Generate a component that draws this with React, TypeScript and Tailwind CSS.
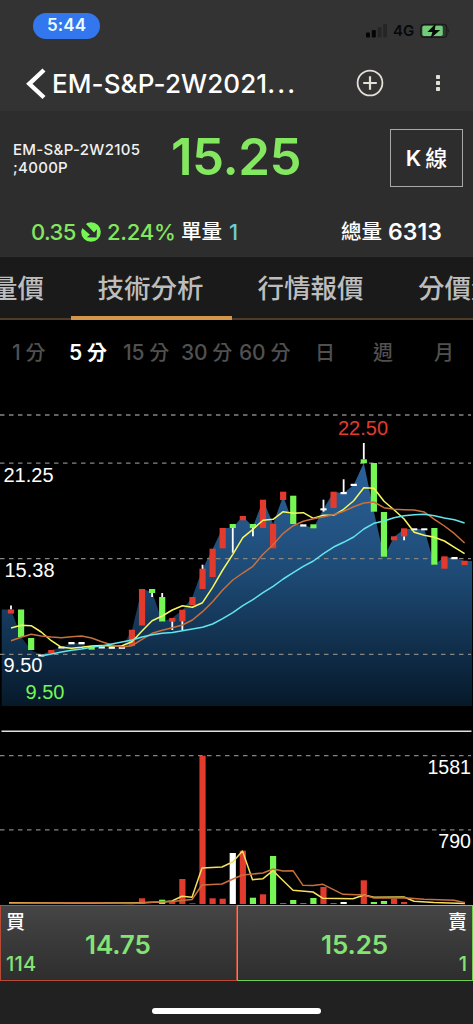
import React from "react";

type Tone = "r" | "g" | "w";
// [body top, body bottom, tone, wick top, wick bottom, close y]
type Candle = [number, number, Tone, number, number, number];

const FILL: Record<Tone, string> = { r: "#e23b2e", g: "#76f654", w: "#ffffff" };
const x = (i: number) => 11 + i * 10.08;

const candles: Candle[] = [
  [609.5, 613.5, "r", 605.5, 609.5, 609.5],
  [609.5, 637, "g", 0, 0, 637],
  [638, 650, "g", 0, 0, 650],
  [654.5, 656.5, "w", 0, 0, 655],
  [650, 653, "r", 0, 0, 650],
  [646.5, 648.5, "w", 0, 0, 647.5],
  [642, 644.3, "w", 0, 0, 643],
  [642, 644.3, "w", 0, 0, 643],
  [646, 649.7, "g", 0, 0, 649.5],
  [646.5, 648.5, "w", 0, 0, 647.5],
  [646.8, 648.8, "w", 0, 0, 647.5],
  [646.8, 648.8, "w", 0, 0, 647.5],
  [629.7, 646, "r", 0, 0, 630],
  [589, 625.5, "r", 0, 0, 589],
  [589, 593, "g", 593, 597, 592],
  [597, 621.5, "g", 593, 597, 621.5],
  [618, 621.7, "r", 621, 630, 618],
  [609.7, 621.3, "r", 621, 630, 610],
  [597, 605, "r", 0, 0, 597],
  [568.7, 589, "r", 564.7, 569, 569],
  [548.7, 577, "r", 0, 0, 549],
  [528, 548.3, "r", 0, 0, 528],
  [524, 528, "g", 528, 552.7, 528],
  [516, 520.3, "r", 0, 0, 516],
  [524, 528, "g", 528, 536.3, 527],
  [499.7, 528, "r", 0, 0, 500],
  [524, 548.3, "r", 0, 0, 524],
  [491.7, 500, "r", 0, 0, 496],
  [495.7, 524, "g", 0, 0, 524],
  [524.3, 526.6, "w", 0, 0, 525],
  [524.3, 528.3, "g", 0, 0, 528],
  [508.3, 510.4, "w", 499.7, 511.7, 509],
  [491.7, 508, "r", 0, 0, 492],
  [492, 494.2, "w", 479.3, 493, 493],
  [483.8, 486, "w", 0, 0, 485],
  [459.3, 463.3, "g", 443, 459.3, 463],
  [463, 511.7, "g", 0, 0, 511.7],
  [512, 556.7, "g", 0, 0, 556.7],
  [536.3, 540.3, "r", 0, 0, 537],
  [528.3, 536.3, "r", 536.3, 540.3, 529],
  [528.3, 530.3, "w", 0, 0, 529],
  [528.3, 530.3, "w", 0, 0, 529],
  [528, 564.7, "g", 0, 0, 564.7],
  [556.3, 568.7, "r", 0, 0, 557],
  [557, 559.2, "w", 0, 0, 558],
  [560.7, 565, "r", 0, 0, 561],
];

const ma5 = [
  628, 625.3, 625.7, 632, 640.7, 647.3, 648.3, 647.3, 646, 645.5, 646, 645.8, 641.7, 631, 620.7, 616, 610, 605.7,
  607.3, 602.7, 587.3, 570, 554.3, 537.7, 529.3, 520.3, 519.3, 511.7, 513.3, 512.7, 518.3, 515.3, 515.3, 509.3,
  500.7, 487.7, 488.3, 501.3, 509.7, 519, 532.3, 535.3, 537.3, 541, 547.3, 553.7,
];
const ma10 = [
  640.7, 637.3, 634.3, 636, 637, 637.7, 636.7, 636, 638, 641.7, 645, 647, 645.7, 639.3, 633.3, 630.3, 627.7, 625,
  620, 611.7, 601.7, 590, 580, 573, 566.3, 554.3, 544.7, 533.3, 525.7, 521.2, 518.7, 516.7, 514.7, 511.3, 506.7,
  503, 502, 507.7, 509.3, 509.7, 510, 512, 519.3, 526, 533.7, 543,
];
const ma20 = [
  656, 654, 652, 650.3, 649, 647.3, 646, 644, 642, 640, 637, 634.7, 633.3, 632.5, 630.7, 629, 627.3, 624, 618.7,
  612.7, 605.7, 599.7, 592.7, 586.3, 579, 572.7, 566.3, 561, 553.7, 547, 542.3, 537, 529, 523.3, 521, 517.7, 515.7,
  514.7, 514.3, 515.7, 518, 519.7, 523,
];

const volumes: [number, number, Tone][] = [
  [13, 898.3, "r"], [15, 899.7, "g"], [16, 902, "r"], [17, 879, "r"], [18, 903.3, "r"], [19, 755.7, "r"],
  [20, 898.3, "r"], [21, 898.7, "r"], [22, 853, "w"], [23, 850.7, "r"], [24, 897.7, "g"], [25, 894.3, "r"],
  [26, 856, "g"], [27, 903, "r"], [28, 900, "g"], [29, 903.4, "g"], [30, 898, "g"], [31, 887, "r"],
  [32, 903, "r"], [33, 902, "w"], [35, 880.3, "r"], [36, 902, "g"], [37, 901, "g"], [38, 898.7, "r"], [39, 902, "r"],
];

const volFast =
  "9,902.7 80,903 132,903 162,902 172,901 182,896.3 192,897.3 202,868 222,867 233,861.7 242.5,851 252.5,879.7 263,878.7 273,870.7 293,890.3 313,892 323,898.3 353,898.7 364,895 374,897.3 404,897 414,901.3 434,902.5 465,903.5";
const volSlow =
  "9,903.2 90,902.8 132,903.4 152,902.3 172,901.5 182,900.5 192,899.5 202,885 222,884 233,879 242.5,875 263,873 273,869 283,871 293,870.7 303,885.3 313,885.6 323,884.3 343,894.3 364,895 374,898 404,897.7 424,899.3 454,900.3 465,902.7";

const path = (ys: number[], from = 0) => ys.map((y, i) => `${x(i + from).toFixed(1)},${y}`).join(" ");

function Chart() {
  const area = `1.7,706 1.7,609.5 ${candles.map((c, i) => `${x(i).toFixed(1)},${c[5]}`).join(" ")} 472,561 472,706`;
  return (
    <svg className="block h-[525px] w-full shrink-0" viewBox="0 380 473 525">
      <defs>
        <linearGradient id="area" gradientUnits="userSpaceOnUse" x1="0" y1="460" x2="0" y2="706">
          <stop offset="0" stopColor="#2b629a" />
          <stop offset="0.45" stopColor="#1e4b76" />
          <stop offset="1" stopColor="#06192a" />
        </linearGradient>
      </defs>
      <polygon points={area} fill="url(#area)" />
      <g stroke="#858585" strokeWidth="1.3" strokeDasharray="4.5 4.5">
        {[415, 463.2, 558.7, 654.3, 755.7, 829.8].map((y) => (
          <line key={y} x1="0" x2="471" y1={y} y2={y} />
        ))}
      </g>
      <line x1="1.5" x2="471.5" y1="731.2" y2="731.2" stroke="#e0e0e0" strokeWidth="1.5" />
      {candles.map(([t, b, tone, wt, wb], i) => (
        <g key={i}>
          {wt > 0 && <rect x={x(i) - 0.9} y={wt} width="1.8" height={wb - wt} fill="#fff" />}
          <rect x={x(i) - 3.1} y={t} width="6.2" height={b - t} fill={FILL[tone]} />
        </g>
      ))}
      {volumes.map(([i, t, tone]) => (
        <rect key={i} x={x(i) - 3.1} y={t} width="6.2" height={904 - t} fill={FILL[tone]} />
      ))}
      <g fill="none" strokeWidth="1.5" strokeLinejoin="round">
        <polyline points={path(ma5)} stroke="#f7f760" />
        <polyline points={path(ma10)} stroke="#c96f3c" />
        <polyline points={path(ma20, 3)} stroke="#62e6ee" />
        <polyline points={volFast} stroke="#f4df5c" />
        <polyline points={volSlow} stroke="#c7703c" />
      </g>
      <g fontFamily="Liberation Sans, sans-serif" fontSize="20" fill="#fff">
        <text x="3.5" y="482">21.25</text>
        <text x="4.5" y="577">15.38</text>
        <text x="3.5" y="672">9.50</text>
        <text x="25.5" y="699" fill="#76f654">9.50</text>
        <text x="338" y="434.7" fill="#e23b2e">22.50</text>
        <text x="471" y="774.3" textAnchor="end" fontSize="19.6">1581</text>
        <text x="471" y="848.3" textAnchor="end" fontSize="19.6">790</text>
      </g>
    </svg>
  );
}

const SANS = "font-[Inter,'Noto_Sans_CJK_TC',sans-serif]";

const periods: [string, string, string][] = [
  ["1", "分", "w-[58px] pl-3"],
  ["5", "分", "w-[65px] pl-[11px] font-semibold text-white"],
  ["15", "分", "w-[58px]"],
  ["30", "分", "w-[58px]"],
  ["60", "分", "w-[76px]"],
  ["", "日", "w-[58px]"],
  ["", "週", "w-[61px]"],
  ["", "月", "w-[30px]"],
];

export default function App() {
  return (
    <div className={`flex h-[1024px] w-[473px] flex-col overflow-hidden bg-black ${SANS}`}>
      <header className="flex h-[111px] shrink-0 flex-col bg-[#333333]">
        <div className="flex h-[56px] justify-between pr-[22px] pl-[33px]">
          <div className="mt-[13px] flex h-[26px] w-[67px] items-center justify-center rounded-full bg-[#3377ef] text-[17px] font-semibold tracking-[0.1px] text-[#eaffff]">
            5:44
          </div>
          <div className="mt-[22px] flex h-[18px] items-center">
            <svg className="h-[18px] w-[22px]" viewBox="0 0 22 18">
              <rect x="0" y="10.5" width="4" height="5" rx="1" fill="#050505" />
              <rect x="5.8" y="8" width="4" height="7.5" rx="1" fill="#050505" />
              <rect x="11.6" y="5" width="3.8" height="10.5" rx="1" fill="#252525" />
              <rect x="17.2" y="2" width="3.8" height="13.5" rx="1" fill="#252525" />
            </svg>
            <span className="ml-[5px] w-[24px] text-[15px] font-semibold text-[#080808]">4G</span>
            <svg className="ml-[3px] h-[16px] w-[31px]" viewBox="0 0 31 16">
              <rect x="0.8" y="1.4" width="26" height="13" rx="3.5" fill="none" stroke="#171a17" strokeWidth="1.2" />
              <rect x="2.3" y="2.8" width="20.5" height="10.3" rx="1.8" fill="#70cb7a" />
              <path d="M15.8 .5 7.4 9h5l-2 6.5L20.2 7h-5.4Z" fill="#070b08" />
              <path d="M28.3 5.5q2 2.3 0 4.6Z" fill="#1b1b1b" />
            </svg>
          </div>
        </div>
        <div className="flex h-[55px] items-center pl-[25px]">
          <svg className="h-[34px] w-[22px]" viewBox="0 0 22 34">
            <path d="M19 3 4.3 16.8 19 30.5" fill="none" stroke="#fff" strokeWidth="4.4" />
          </svg>
          <h1 className="ml-[5px] w-[267px] text-[26px] leading-[54px] font-medium tracking-[0.1px] text-white">
            EM-S&amp;P-2W2021<span className="tracking-[2.2px]">...</span>
          </h1>
          <svg className="ml-[37px] h-[28px] w-[28px] -translate-y-px" viewBox="0 0 28 28" fill="none" stroke="#e2dfd6">
            <circle cx="14" cy="14" r="12.4" strokeWidth="1.8" />
            <path d="M14 7.2v13.6M7.2 14h13.6" strokeWidth="2.2" />
          </svg>
          <svg className="ml-[51px] h-[20px] w-[6px] -translate-y-px" viewBox="0 0 6 20" fill="#e2dfd6">
            <rect x="1" y="2" width="4" height="4" rx=".7" />
            <rect x="1" y="8" width="4" height="4" rx=".7" />
            <rect x="1" y="14" width="4" height="4" rx=".7" />
          </svg>
        </div>
      </header>

      <section className="flex h-[145px] shrink-0 flex-col bg-[#2d2d2d] text-white">
        <div className="flex h-[92px] items-start">
          <p className="mt-[30px] w-[158px] pl-[13px] text-[15px] leading-[18px] font-medium tracking-[0.3px] text-[#f1f1f1]">
            EM-S&amp;P-2W2105
            <br />
            ;4000P
          </p>
          <div className="mt-[15px] w-[232px] pl-[13px] text-[51px] leading-[62px] font-semibold tracking-[-0.5px] text-[#84e760]">
            15.25
          </div>
          <button className="mt-[18px] flex h-[58px] w-[73px] items-center justify-center gap-[4px] border border-[#a8a8a8] text-[22px] font-semibold">
            <span>K</span>
            <span className="font-medium">線</span>
          </button>
        </div>
        <div className="flex h-[53px] items-center pt-[4px] pl-[31px] text-[22px] leading-[30px] font-medium">
          <span className="w-[50px] tracking-[-0.6px] text-[#84e760]">0.35</span>
          <svg className="h-[20px] w-[20px]" viewBox="0 0 20 20">
            <circle cx="10" cy="10" r="9.8" fill="#76f654" />
            <path d="M0 0H6L5.2 2.3 13 10.5 16 7.2 15.5 15.5 5.8 15.2 9 12.8 1.5 6.2 0 8Z" fill="#2d2d2d" />
          </svg>
          <span className="ml-[6px] w-[74px] tracking-[-0.2px] text-[#84e760]">2.24%</span>
          <span className="w-[48px] text-[20.5px]">單量</span>
          <span className="w-[112px] text-[#70cbd3]">1</span>
          <span className="w-[47px] text-[20.5px]">總量</span>
          <span className="text-[23px] font-semibold tracking-[0.1px]">6313</span>
        </div>
      </section>

      <nav className="flex h-[64px] shrink-0 overflow-hidden border-t border-t-[#303030] bg-[#1a1a1a] text-[26.5px] font-medium whitespace-nowrap text-[#bdbdbd]">
        <span className="flex w-[71px] shrink-0 items-center justify-end border-b-2 border-[#503b29] pt-[3px] pr-[27px]">量價</span>
        <span className="flex w-[161px] shrink-0 items-center justify-center border-b-[4px] border-[#d4964a] pt-[5px] pr-[2px]">
          技術分析
        </span>
        <span className="flex w-[161px] shrink-0 items-center justify-center border-b-2 border-[#503b29] pt-[3px] pr-[4px]">
          行情報價
        </span>
        <span className="flex w-[161px] shrink-0 items-center border-b-2 border-[#503b29] pt-[3px] pl-[25px]">分價量</span>
      </nav>

      <div className="flex h-[60px] shrink-0 items-center pt-[6px] text-[20px] font-medium whitespace-nowrap text-[#505050]">
        {periods.map(([n, unit, cls]) => (
          <span key={n + unit} className={`flex shrink-0 items-center gap-[5px] ${cls}`}>
            {n && <span className="text-[21px] tracking-[-0.2px]">{n}</span>}
            <span>{unit}</span>
          </span>
        ))}
      </div>

      <Chart />

      <footer className="flex h-[119px] shrink-0 flex-col items-center bg-[#212121]">
        <div className="flex h-[76px] w-full text-[#84e375]">
          <div className="flex w-[237px] items-center border border-[#b94a38] bg-linear-to-b from-[#454545] to-[#2e2e2e]">
            <div className="flex h-full w-[84px] flex-col justify-between pt-[4px] pb-[4px] pl-[5px]">
              <span className="text-[19px] leading-[26px] font-medium text-white">買</span>
              <span className="text-[20px] leading-[24px] font-medium tracking-[0.2px]">114</span>
            </div>
            <span className="pt-[2px] text-[26px] font-semibold tracking-[-0.1px]">14.75</span>
          </div>
          <div className="flex w-[236px] items-center justify-between border border-[#70cf50] border-l-[#aaa343] bg-linear-to-b from-[#454545] to-[#2e2e2e]">
            <span className="pt-[2px] pl-[83px] text-[26px] font-semibold tracking-[-0.1px]">15.25</span>
            <div className="flex h-full flex-col items-end justify-between pt-[4px] pr-[5px] pb-[4px]">
              <span className="text-[19px] leading-[26px] font-medium text-white">賣</span>
              <span className="text-[20px] leading-[24px] font-medium">1</span>
            </div>
          </div>
        </div>
        <div className="mt-[27px] h-[6px] w-[169px] rounded-full bg-white" />
      </footer>
    </div>
  );
}
